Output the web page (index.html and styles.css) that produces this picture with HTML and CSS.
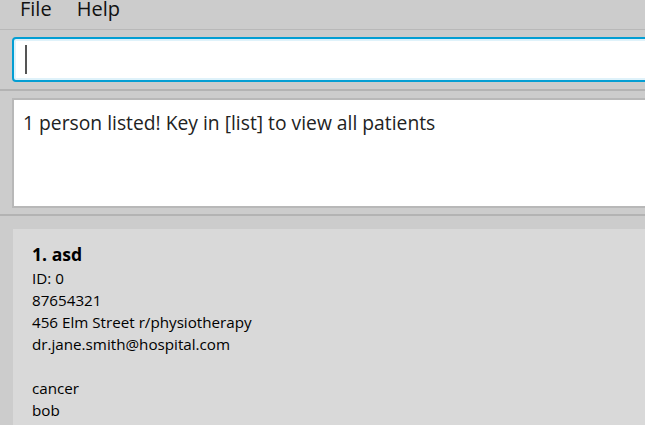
FILE: index.html
```html
<!DOCTYPE html>
<html>
<head>
<meta charset="utf-8">
<link rel="stylesheet" href="styles.css">
</head>
<body>
<div class="app">
  <div class="menubar">
    <span class="menu-item">File</span>
    <span class="menu-item">Help</span>
  </div>
  <div class="command-pane">
    <div class="command-box"><span class="caret"></span></div>
  </div>
  <div class="result-pane">
    <div class="result-box">1 person listed! Key in [list] to view all patients</div>
  </div>
  <div class="list-pane">
    <div class="card">
      <div class="card-title">1. asd</div>
      <div class="card-line">ID: 0</div>
      <div class="card-line">87654321</div>
      <div class="card-line">456 Elm Street r/physiotherapy</div>
      <div class="card-line">dr.jane.smith@hospital.com</div>
      <div class="card-line blank"></div>
      <div class="card-line">cancer</div>
      <div class="card-line">bob</div>
    </div>
  </div>
</div>
</body>
</html>
```
FILE: styles.css
```css
html, body {
  margin: 0;
  padding: 0;
  width: 645px;
  height: 425px;
  overflow: hidden;
  background: #cccccc;
  font-family: "Open Sans", "Noto Sans", sans-serif;
  color: #000;
}
.app {
  width: 700px;
  display: flex;
  flex-direction: column;
}
.menubar {
  height: 30px;
  border-bottom: 1px solid #b8b8b8;
  display: flex;
  gap: 25px;
  padding-left: 20px;
  font-size: 20px;
  line-height: 18px;
  color: #111;
  box-sizing: border-box;
}
.menu-item {
  display: block;
}
.command-pane {
  padding: 7px 0 7px 12px;
  border-bottom: 2px solid #b3b3b3;
}
.command-box {
  height: 45px;
  box-sizing: border-box;
  background: #fff;
  border: 2px solid #039ed3;
  border-radius: 4px;
  box-shadow: inset 0 0 0 2px #dff2fa;
  display: flex;
  align-items: center;
  padding-left: 11px;
}
.caret {
  width: 2px;
  height: 29px;
  background: #555;
}
.result-pane {
  padding: 7px 0 6px 12px;
  border-bottom: 2px solid #b3b3b3;
}
.result-box {
  height: 110px;
  box-sizing: border-box;
  background: #fff;
  border: 2px solid #b8b8b8;
  border-right: none;
  padding: 9px 0 0 9px;
  font-size: 19.3px;
  line-height: 28px;
  color: #222;
}
.list-pane {
  padding: 13px 0 0 13px;
}
.card {
  background: #d9d9d9;
  padding: 12px 0 0 19px;
  height: 300px;
  box-sizing: border-box;
}
.card-title {
  font-weight: 700;
  font-size: 17.6px;
  line-height: 26px;
}
.card-line {
  font-size: 15.2px;
  line-height: 22px;
}
.card-line.blank {
  height: 22px;
}
```
